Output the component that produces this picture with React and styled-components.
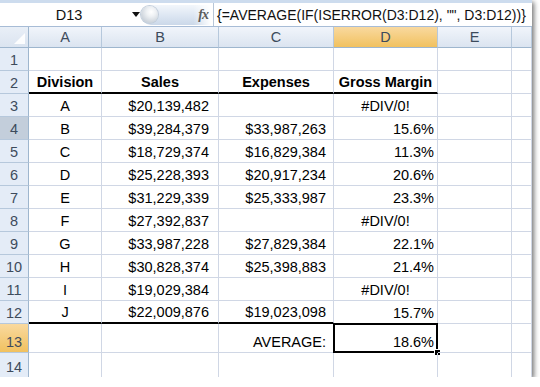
import React from 'react'
import styled, { createGlobalStyle } from 'styled-components'

const GlobalStyle = createGlobalStyle`
  body {
    margin: 0;
    background: #ffffff;
  }
`

const COLS = [29, 73, 117, 115, 104, 74, 20]
const ROW_H = [23, 23, 23, 23, 23, 23, 23, 23, 23, 23, 23, 23, 29, 25]

const rows = [
  ['', '', '', ''],
  ['Division', 'Sales', 'Expenses', 'Gross Margin'],
  ['A', '$20,139,482', '', '#DIV/0!'],
  ['B', '$39,284,379', '$33,987,263', '15.6%'],
  ['C', '$18,729,374', '$16,829,384', '11.3%'],
  ['D', '$25,228,393', '$20,917,234', '20.6%'],
  ['E', '$31,229,339', '$25,333,987', '23.3%'],
  ['F', '$27,392,837', '', '#DIV/0!'],
  ['G', '$33,987,228', '$27,829,384', '22.1%'],
  ['H', '$30,828,374', '$25,398,883', '21.4%'],
  ['I', '$19,029,384', '', '#DIV/0!'],
  ['J', '$22,009,876', '$19,023,098', '15.7%'],
  ['', '', 'AVERAGE:', '18.6%'],
  ['', '', '', ''],
]

const Frame = styled.div`
  width: 532px;
  height: 377px;
  overflow: hidden;
  background: #ffffff;
  box-shadow: 2px 2px 5px rgba(0, 0, 0, 0.55);
  font-family: "Liberation Sans", Arial, sans-serif;
`

const FormulaBar = styled.div`
  display: flex;
  align-items: stretch;
  height: 23px;
  border-top: 3px solid #cddcee;
  border-bottom: 1px solid #a7bcd6;
  background: #ffffff;
`

const NameBox = styled.div`
  width: 126px;
  display: flex;
  align-items: center;
  justify-content: center;
  font-size: 14.5px;
  color: #111;
  padding-left: 6px;
`

const Arrow = styled.div`
  width: 8px;
  display: flex;
  align-items: center;
  justify-content: center;
  svg { display: block; }
`

const Pill = styled.div`
  position: relative;
  margin: 2px 0 1px 1px;
  width: 70px;
  border-radius: 10px 0 0 10px;
  background:
    linear-gradient(90deg, rgba(255, 255, 255, 0) 75%, #ffffff 100%),
    linear-gradient(#f2f6fb, #dce6f2 55%, #cbd8e9);
  display: flex;
  align-items: center;
  justify-content: flex-end;
  padding-right: 3px;
  box-sizing: border-box;
`

const Knob = styled.div`
  position: absolute;
  left: 0;
  top: 1px;
  width: 17px;
  height: 17px;
  border-radius: 50%;
  background: radial-gradient(circle at 60% 35%, #ffffff 0, #eef1f4 30%, #b4bec9 100%);
  box-shadow: 0 0 0 1px #c3cedb;
`

const Fx = styled.span`
  font-family: "Liberation Serif", "Times New Roman", serif;
  font-style: italic;
  font-weight: bold;
  font-size: 14px;
  color: #5c5c5c;
  letter-spacing: -1px;
`

const FormulaText = styled.div`
  flex: 1;
  display: flex;
  align-items: center;
  padding-left: 3px;
  border-left: 1px solid #b7c6d8;
  margin-left: 2px;
  font-size: 14px;
  color: #111;
  white-space: nowrap;
`

const Grid = styled.div`
  display: grid;
  grid-template-columns: ${COLS.map((c) => c + 'px').join(' ')};
  grid-template-rows: 21px ${ROW_H.map((h) => h + 'px').join(' ')};
`

const Corner = styled.div`
  background: linear-gradient(#e9eff7, #dbe4f0);
  border-right: 1px solid #9eb6ce;
  border-bottom: 1px solid #9eb6ce;
  position: relative;
  &::after {
    content: '';
    position: absolute;
    right: 3px;
    bottom: 3px;
    border-style: solid;
    border-width: 0 0 11px 11px;
    border-color: transparent transparent #ffffff transparent;
    opacity: 0.9;
  }
`

const ColHead = styled.div`
  display: flex;
  align-items: center;
  justify-content: center;
  font-size: 14.5px;
  color: #3d4b5c;
  border-right: 1px solid #b6c8dc;
  border-bottom: 1px solid #9eb6ce;
  background: ${(p) =>
    p.$active
      ? 'linear-gradient(#f9d99f, #f1c15f)'
      : 'linear-gradient(#f1f5fb, #dbe4f0)'};
`

const RowHead = styled.div`
  display: flex;
  align-items: flex-end;
  justify-content: center;
  padding-bottom: 2px;
  font-size: 14.5px;
  color: #3d4b5c;
  border-right: 1px solid #9eb6ce;
  border-bottom: 1px solid #b6c8dc;
  background: ${(p) =>
    p.$active ? 'linear-gradient(#f9d99f, #f1c15f)' : p.$hover ? '#c3cedb' : '#e4ecf7'};
`

const Cell = styled.div`
  position: relative;
  display: flex;
  align-items: flex-end;
  justify-content: ${(p) => p.$align || 'flex-start'};
  padding: 0 ${(p) => p.$pad ?? 3}px 2px 3px;
  font-size: 14.5px;
  font-weight: ${(p) => (p.$bold ? 'bold' : 'normal')};
  color: #000;
  white-space: nowrap;
  border-right: 1px solid #d0d7e5;
  border-bottom: ${(p) => (p.$thick ? '2px solid #000' : '1px solid #d0d7e5')};
`

const Selection = styled.div`
  position: absolute;
  left: -1px;
  top: -1px;
  right: -1px;
  bottom: -1px;
  border: 2px solid #000;
  pointer-events: none;
  &::after {
    content: '';
    position: absolute;
    right: -5px;
    bottom: -5px;
    width: 5px;
    height: 5px;
    background: #000;
    border: 1px solid #fff;
  }
`

const letters = ['A', 'B', 'C', 'D', 'E', '']
const pads = [3, 9, 7, 3]

const alignFor = (r, c) => {
  if (r === 1 || c === 0) return 'center'
  if (c === 3 && rows[r][3] === '#DIV/0!') return 'center'
  return 'flex-end'
}

export default function App() {
  return (
    <>
      <GlobalStyle />
      <Frame>
        <FormulaBar>
          <NameBox>D13</NameBox>
          <Arrow>
            <svg width="8" height="5" viewBox="0 0 8 5">
              <path d="M0 0h8L4 5z" fill="#111" />
            </svg>
          </Arrow>
          <Pill>
            <Knob />
            <Fx>fx</Fx>
          </Pill>
          <FormulaText>{'{=AVERAGE(IF(ISERROR(D3:D12), "", D3:D12))}'}</FormulaText>
        </FormulaBar>
        <Grid>
          <Corner />
          {letters.map((l, i) => (
            <ColHead key={i} $active={l === 'D'}>{l}</ColHead>
          ))}
          {rows.map((row, r) => (
            <React.Fragment key={r}>
              <RowHead $active={r === 12} $hover={r === 3}>{r + 1}</RowHead>
              {row.map((v, c) => (
                <Cell
                  key={c}
                  $align={alignFor(r, c)}
                  $pad={alignFor(r, c) === 'flex-end' ? pads[c] : 3}
                  $bold={r === 1}
                  $thick={r === 1 || (r === 11 && c < 3)}
                >
                  {v}
                  {r === 12 && c === 3 && <Selection />}
                </Cell>
              ))}
              <Cell />
              <Cell />
            </React.Fragment>
          ))}
        </Grid>
      </Frame>
    </>
  )
}
